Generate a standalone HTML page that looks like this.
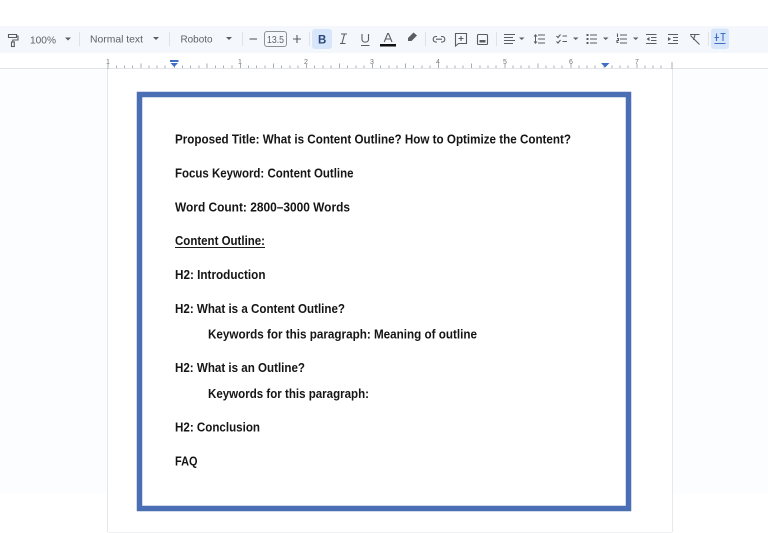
<!DOCTYPE html>
<html><head><meta charset="utf-8"><style>
html,body{margin:0;padding:0;width:768px;height:533px;overflow:hidden;background:#fff}
svg{display:block;filter:blur(0.35px)}
text{font-family:"Liberation Sans",sans-serif}
.b{font-weight:bold;font-size:12.5px;fill:#151515}
.t{font-size:10.5px;fill:#5f6368}
.r{font-size:7px;fill:#70757a}
.i{fill:none;stroke:#5a5e63;stroke-width:1.1}
.f{fill:#5a5e63}
.s{stroke:#dfe3e8;stroke-width:1}
</style></head><body>
<svg width="768" height="533" viewBox="0 0 768 533" xmlns="http://www.w3.org/2000/svg">
<rect width="768" height="533" fill="#fff"/>
<rect x="0" y="69" width="768" height="424" fill="#fcfdfe"/>
<rect x="108" y="69" width="564" height="463" fill="#fff"/>
<path d="M107.500 69V532M672.500 69V532" stroke="#e6e8ec"/>
<path d="M108 532.500H672" stroke="#eef0f2"/>
<!-- toolbar -->
<rect x="0" y="26" width="768" height="27" fill="#f4f7fb"/>
<rect x="0" y="53" width="768" height="15" fill="#fff"/>
<path d="M0 68.500H768" stroke="#e2e4e8"/>
<!-- paint format -->
<path class="i" d="M8.500 34.500H16.500V37.500H8.500ZM16.500 36H18V40H12.800V42"/><rect x="11.500" y="42" width="2.800" height="4.500" class="i"/>
<text class="t" x="30" y="43.500" textLength="26" lengthAdjust="spacingAndGlyphs">100%</text>
<path class="f" d="M65 37.500H71L68 40.500Z"/>
<path class="s" d="M79.500 32V46M169.500 32V46M242.500 32V46M309.500 32V46M425.500 32V46M496.500 32V46M708.500 32V46"/>
<text class="t" x="90" y="42.500" textLength="53" lengthAdjust="spacingAndGlyphs">Normal text</text>
<path class="f" d="M153 37H159L156 40Z"/>
<text class="t" x="180.500" y="42.500" textLength="32" lengthAdjust="spacingAndGlyphs">Roboto</text>
<path class="f" d="M226 37H232L229 40Z"/>
<path d="M249.500 39H257" stroke="#5a5e63" stroke-width="1.100"/>
<rect x="264.500" y="31.500" width="22" height="15" rx="2.500" fill="none" stroke="#8d9296"/>
<text class="t" x="267" y="43" textLength="17" lengthAdjust="spacingAndGlyphs">13.5</text>
<path d="M293 39H301M297 35V43" stroke="#5a5e63" stroke-width="1.100"/>
<!-- B I U A -->
<rect x="312" y="29" width="20" height="20" rx="3" fill="#d8e6fb"/>
<text x="318" y="43.500" font-size="11.500" font-weight="bold" fill="#2a4578">B</text>
<path class="i" d="M341 34H347M340 43.500H345.500M344.500 34L342 43.500" stroke-width="1.300"/>
<path class="i" d="M362 34V39.500C362 43 368.500 43 368.500 39.500V34M361 45.500H369.500"/>
<path class="i" d="M384.200 42L387.700 33.500H388.500L392 42M385.500 39H391"/>
<rect x="380" y="44" width="16" height="2.500" fill="#111"/>
<path class="f" d="M408 38L413.500 32.500L417 35.500L411.500 41L408 41Z"/>
<!-- link, comment, image -->
<path class="i" d="M437 36.500H435.500A2.800 2.800 0 0 0 435.500 42H437M441 36.500H442.500A2.800 2.800 0 0 1 442.500 42H441M436 39.200H442"/>
<path class="i" d="M455.500 33.500H466.500V43.500H458.500L455.500 46ZM461 36V41M458.500 38.500H463.500"/>
<rect class="i" x="477.500" y="34.500" width="10" height="10" rx="1"/><path class="f" d="M479.500 42.500V40H485.500V42.500Z"/>
<!-- align -->
<path class="i" d="M504 34.500H515M504 37.500H513M504 40.500H515M504 43.500H513"/>
<path class="f" d="M519 37.500H524.500L521.700 40Z"/>
<path class="i" d="M538 35H545M538 39H545M538 43H545"/><path class="f" d="M535.500 34L537.500 36.500H533.500ZM535.500 44L537.500 41.500H533.500Z"/><rect x="535" y="36" width="1" height="6" fill="#5a5e63"/>
<path class="i" d="M556.500 36L558 37.500L560.500 34.500M556.500 41.500L558 43L560.500 40M562.500 36H567M562.500 41.500H567"/>
<path class="f" d="M573 37.500H578.500L575.700 40Z"/>
<path class="i" d="M590 35H597M590 39H597M590 43H597"/><path d="M586.500 35H588.500M586.500 39H588.500M586.500 43H588.500" stroke="#5a5e63" stroke-width="2"/>
<path class="f" d="M603 37.500H608.500L605.700 40Z"/>
<path class="i" d="M620 35H627M620 39H627M620 43H627M617.500 33.500V37M617 38.500H618.500V40.500H617V42.500H618.500"/>
<path class="f" d="M633 37.500H638.500L635.700 40Z"/>
<path class="i" d="M646 34.500H656.500M651 37.500H656.500M651 40.500H656.500M646 43.500H656.500"/><path class="f" d="M649.500 37L646.500 39L649.500 41Z"/>
<path class="i" d="M668 34.500H678M673 37.500H678M673 40.500H678M668 43.500H678"/><path class="f" d="M668 37L671 39L668 41Z"/>
<path class="i" d="M690 34.500H699.500M695 35L693.500 40M690.500 35.500L699.500 44.500" stroke-width="1.400"/>
<rect x="711" y="28.500" width="18" height="20.500" rx="3" fill="#d8e6fb"/>
<path d="M716.500 33.500V41M714.500 37.500H719M720.500 33.500H725.500M723 33.500V41M714.500 43.500H725.500" fill="none" stroke="#3f6fc4" stroke-width="1.100"/>
<!-- ruler -->
<path stroke="#a8adb2" stroke-width="1" d="M116.500 65.500V68M124.500 65.500V68M132.500 65.500V68M141 63.500V68M149 65.500V68M157 65.500V68M165 65.500V68M182.500 65.500V68M190.500 65.500V68M199 65.500V68M207 63.500V68M215.500 65.500V68M223.500 65.500V68M232 65.500V68M248.500 65.500V68M256.500 65.500V68M265 65.500V68M273.500 63.500V68M281.500 65.500V68M290 65.500V68M298 65.500V68M314.500 65.500V68M323 65.500V68M331 65.500V68M339.500 63.500V68M347.500 65.500V68M356 65.500V68M364 65.500V68M380.500 65.500V68M389 65.500V68M397 65.500V68M405.500 63.500V68M413.500 65.500V68M422 65.500V68M430 65.500V68M447 65.500V68M455 65.500V68M463 65.500V68M471.500 63.500V68M480 65.500V68M488 65.500V68M496 65.500V68M513 65.500V68M521 65.500V68M529 65.500V68M538 63.500V68M546 65.500V68M554 65.500V68M562 65.500V68M579 65.500V68M587 65.500V68M595 65.500V68M604 63.500V68M612 65.500V68M620 65.500V68M628 65.500V68M645 65.500V68M653 65.500V68M661 65.500V68"/>
<path stroke="#a8adb2" d="M108 64V69M672 62V69M174.500 64V68M240.500 64V68M306.500 64V68M372.500 64V68M438.500 64V68M505 64V68M571 64V68M637 64V68"/>
<text class="r" x="106" y="64">1</text><text class="r" x="238" y="64">1</text><text class="r" x="304" y="64">2</text><text class="r" x="370" y="64">3</text><text class="r" x="436" y="64">4</text><text class="r" x="503" y="64">5</text><text class="r" x="569" y="64">6</text><text class="r" x="635" y="64">7</text>
<path fill="#3f6fc4" d="M170 60H178.500V62H170ZM170.500 63H178L174.200 67Z"/>
<path fill="#3f6fc4" d="M601 63H609.500L605.200 67.500Z"/>
<!-- box -->
<rect x="139.500" y="94.500" width="489" height="414" fill="#fff" stroke="#4a6fb5" stroke-width="5.500"/>
<text class="b" x="175" y="143.500" textLength="396" lengthAdjust="spacingAndGlyphs">Proposed Title: What is Content Outline? How to Optimize the Content?</text>
<text class="b" x="175" y="177.500" textLength="178.500" lengthAdjust="spacingAndGlyphs">Focus Keyword: Content Outline</text>
<text class="b" x="175" y="211.500" textLength="175" lengthAdjust="spacingAndGlyphs">Word Count: 2800–3000 Words</text>
<text class="b" x="175" y="245" textLength="90" lengthAdjust="spacingAndGlyphs">Content Outline:</text>
<path d="M175 247.500H265" stroke="#1c1c1c"/>
<text class="b" x="175" y="279" textLength="90.500" lengthAdjust="spacingAndGlyphs">H2: Introduction</text>
<text class="b" x="175" y="313" textLength="170" lengthAdjust="spacingAndGlyphs">H2: What is a Content Outline?</text>
<text class="b" x="208" y="338.500" textLength="269" lengthAdjust="spacingAndGlyphs">Keywords for this paragraph: Meaning of outline</text>
<text class="b" x="175" y="372" textLength="130" lengthAdjust="spacingAndGlyphs">H2: What is an Outline?</text>
<text class="b" x="208" y="398" textLength="161" lengthAdjust="spacingAndGlyphs">Keywords for this paragraph:</text>
<text class="b" x="175" y="431.500" textLength="85" lengthAdjust="spacingAndGlyphs">H2: Conclusion</text>
<text class="b" x="175" y="465.500" textLength="22.500" lengthAdjust="spacingAndGlyphs">FAQ</text>
</svg>
</body></html>
